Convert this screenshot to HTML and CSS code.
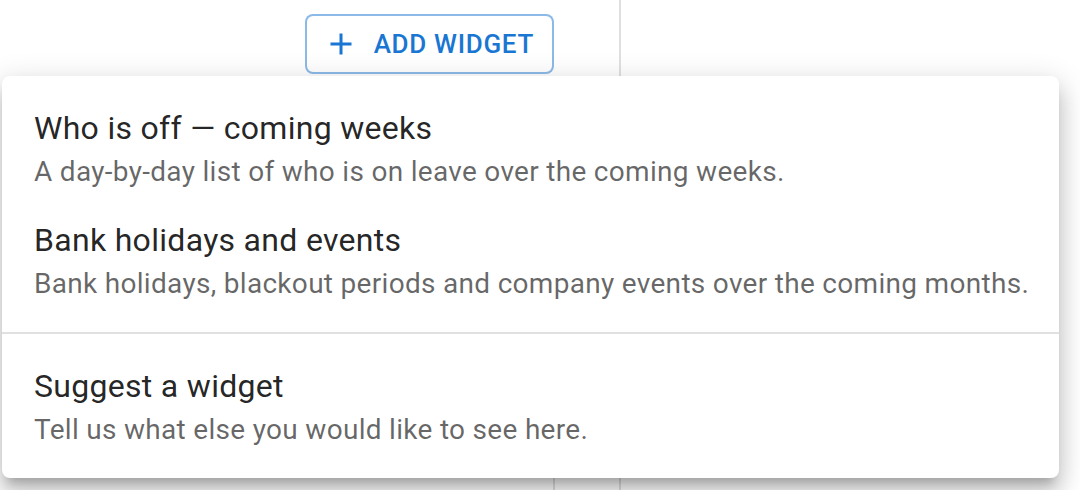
FILE: index.html
```html
<!DOCTYPE html>
<html lang="en">
<head>
  <meta charset="UTF-8">
  <meta name="viewport" content="width=device-width, initial-scale=1.0">
  <title>Add widget</title>
  <link rel="stylesheet" href="styles.css">
</head>
<body>
  <div class="board">
    <div class="main">
      <div class="toolbar">
        <button class="add-btn" type="button">
          <svg class="add-icon" viewBox="0 0 24 24" aria-hidden="true">
            <path d="M19 13h-6v6h-2v-6H5v-2h6V5h2v6h6z"></path>
          </svg>
          Add widget
        </button>
      </div>
      <div class="content">
        <div class="col"></div>
      </div>
    </div>
    <div class="side"></div>
  </div>

  <div class="menu" role="menu">
    <div class="menu-item" role="menuitem">
      <div class="item-title">Who is off — coming weeks</div>
      <div class="item-desc">A day-by-day list of who is on leave over the coming weeks.</div>
    </div>
    <div class="menu-item" role="menuitem">
      <div class="item-title">Bank holidays and events</div>
      <div class="item-desc">Bank holidays, blackout periods and company events over the coming months.</div>
    </div>
    <hr class="divider">
    <div class="menu-item" role="menuitem">
      <div class="item-title">Suggest a widget</div>
      <div class="item-desc">Tell us what else you would like to see here.</div>
    </div>
  </div>
</body>
</html>
```

FILE: styles.css
```css
body {
  margin: 0;
  padding: 0;
  font-family: Roboto, "Liberation Sans", sans-serif;
  background: #fff;
  height: 490px;
  overflow: hidden;
}

.board {
  display: flex;
  height: 490px;
}

.main {
  width: 619px;
  border-right: 2px solid #e0e0e0;
  display: flex;
  flex-direction: column;
}

.side {
  flex: 1;
}

.toolbar {
  display: flex;
  justify-content: flex-end;
  padding: 14px 65px 0 0;
}

.add-btn {
  display: flex;
  align-items: center;
  box-sizing: border-box;
  height: 60px;
  padding: 0 18px 0 20px;
  border: 2px solid rgba(25, 118, 210, 0.5);
  border-radius: 8px;
  background: #fff;
  color: #1976d2;
  font-family: Roboto, "Liberation Sans", sans-serif;
  font-size: 26px;
  font-weight: 500;
  letter-spacing: 0.7px;
  text-transform: uppercase;
  white-space: nowrap;
  cursor: pointer;
}

.add-icon {
  width: 36px;
  height: 36px;
  flex: none;
  fill: currentColor;
  margin: 0 15px 0 -4px;
}

.content {
  flex: 1;
  display: flex;
  padding-top: 16px;
}

.col {
  width: 553px;
  border-right: 2px solid #e0e0e0;
}

.menu {
  position: absolute;
  top: 76px;
  left: 2px;
  width: 1057px;
  box-sizing: border-box;
  padding: 16px 0;
  background: #fff;
  border-radius: 8px;
  box-shadow: 0 10px 10px -6px rgba(0, 0, 0, 0.2),
              0 16px 20px 2px rgba(0, 0, 0, 0.14),
              0 6px 28px 4px rgba(0, 0, 0, 0.12);
}

.menu-item {
  padding: 12px 32px;
  white-space: nowrap;
  cursor: pointer;
}

.item-title {
  font-size: 32px;
  line-height: 48px;
  letter-spacing: 0.3px;
  color: rgba(0, 0, 0, 0.87);
}

.item-desc {
  font-size: 28px;
  line-height: 40px;
  letter-spacing: 0.3px;
  color: rgba(0, 0, 0, 0.6);
}

.divider {
  margin: 16px 0;
  border: 0;
  border-top: 2px solid #e0e0e0;
}
```
